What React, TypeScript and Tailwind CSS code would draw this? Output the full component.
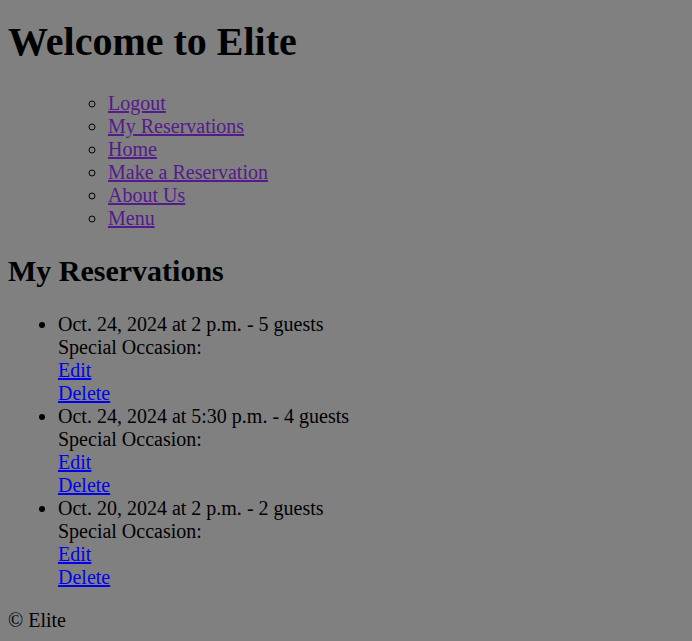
const reservations = [
  { when: 'Oct. 24, 2024 at 2 p.m.', guests: 5 },
  { when: 'Oct. 24, 2024 at 5:30 p.m.', guests: 4 },
  { when: 'Oct. 20, 2024 at 2 p.m.', guests: 2 },
]

const navLinks = ['Logout', 'My Reservations', 'Home', 'Make a Reservation', 'About Us', 'Menu']

export default function App() {
  return (
    <div className="min-h-screen bg-[#808080] text-black text-[20px] leading-[23px] font-['Liberation_Serif',serif] px-2 pt-px pb-2">
      <header>
        <h1 className="text-[40px] leading-[46px] font-bold mt-[18px] mb-[26.8px]">Welcome to Elite</h1>
        <nav>
          <ul className="pl-[50px] my-5">
            <li className="list-none">
              <ul className="pl-[50px] list-[circle]">
                {navLinks.map((l) => (
                  <li key={l}>
                    <a href="#" className="underline text-[#551A8B]">{l}</a>
                  </li>
                ))}
              </ul>
            </li>
          </ul>
        </nav>
      </header>
      <main>
        <h2 className="text-[30px] leading-[35px] font-bold mt-[23.5px] mb-[24.9px]">My Reservations</h2>
        <ul className="pl-[50px] my-5 list-disc">
          {reservations.map((r, i) => (
            <li key={i}>
              {r.when} - {r.guests} guests
              <br />
              Special Occasion:
              <br />
              <a href="#" className="underline text-[#0000EE]">Edit</a>
              <br />
              <a href="#" className="underline text-[#0000EE]">Delete</a>
            </li>
          ))}
        </ul>
      </main>
      <footer>
        <p className="my-5">© Elite</p>
      </footer>
    </div>
  )
}
